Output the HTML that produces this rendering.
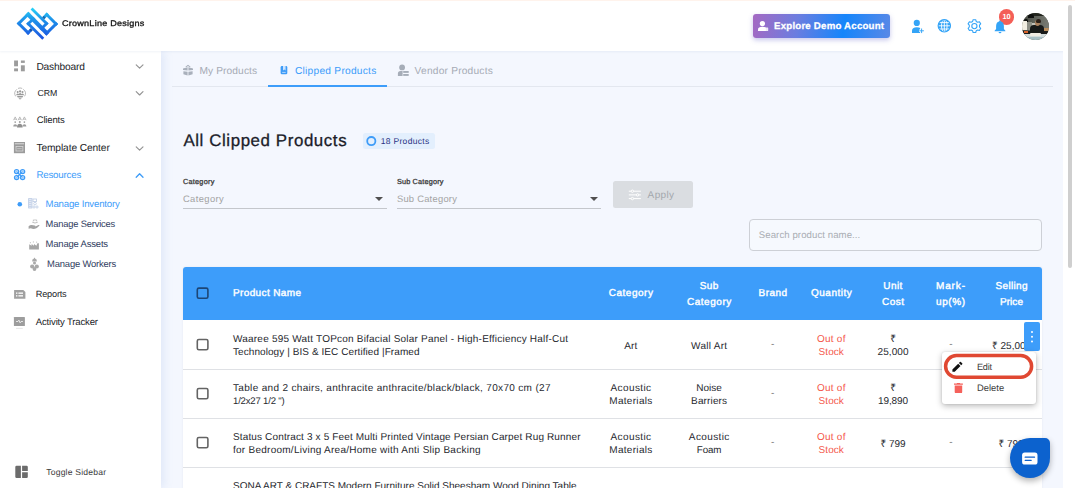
<!DOCTYPE html>
<html><head><meta charset="utf-8"><title>All Clipped Products</title>
<style>
*{box-sizing:border-box;margin:0;padding:0}
html,body{width:1075px;height:488px;overflow:hidden;background:#fff;font-family:"Liberation Sans",sans-serif;text-rendering:geometricPrecision;}
#root{position:relative;width:1075px;height:488px;overflow:hidden;background:#fff}
.a{position:absolute}
.t{position:absolute;white-space:nowrap}
svg{position:absolute;overflow:visible}
#main{left:161px;top:51px;width:902px;height:437px;background:#f4f7fe}
#topline{left:0;top:0;width:1075px;height:1px;background:#fff3ec}
#header{left:0;top:1px;width:1075px;height:50px;background:#fff;box-shadow:0 1px 2px rgba(70,100,150,.08)}
#sidebar{left:0;top:51px;width:161px;height:437px;background:#fff;box-shadow:3px 0 9px rgba(100,145,210,.14)}
#thumb{left:1068px;top:5px;width:4px;height:263px;border-radius:2px;background:#cfcfcf}
.cb{width:13px;height:13px;border:1.5px solid #3a3a3a;border-radius:2px}
.hr{height:1px;background:#dfe1e5}
</style></head><body><div id="root">
<div class="a" id="main"></div>
<div class="a" id="sidebar"></div>
<div class="a" id="header"></div>
<div class="a" id="topline"></div>
<div class="a" style="left:1063px;top:1px;width:12px;height:487px;background:#fff"></div>
<div class="a" id="thumb"></div>

<!-- tabs -->
<div class="a" style="left:172px;top:86px;width:881px;height:1px;background:#e3e7ef"></div>
<div class="a" style="left:268px;top:85px;width:119px;height:2px;background:#3d9dfa"></div>

<!-- badge -->
<div class="a" style="left:362.8px;top:133px;width:72.2px;height:15.8px;background:#e3effd;border-radius:2.5px"></div>
<svg style="left:364px;top:134px" width="14" height="14" viewBox="364 134 14 14"><circle cx="371.3" cy="141.1" r="4.1" fill="none" stroke="#3e9cf8" stroke-width="1.8"/></svg>

<!-- filters -->
<div class="a" style="left:183px;top:208px;width:204px;height:1px;background:#c4c7cc"></div>
<div class="a" style="left:397px;top:208px;width:204px;height:1px;background:#c4c7cc"></div>
<div class="a" style="left:374.7px;top:196.9px;width:0;height:0;border-left:4px solid transparent;border-right:4px solid transparent;border-top:4px solid #505050"></div>
<div class="a" style="left:589.9px;top:196.9px;width:0;height:0;border-left:4px solid transparent;border-right:4px solid transparent;border-top:4px solid #505050"></div>
<div class="a" style="left:613px;top:181.4px;width:80px;height:26.6px;background:#dadde1;border-radius:2.5px"></div>

<!-- search -->
<div class="a" style="left:749px;top:219px;width:293px;height:32px;border:1px solid #cdd0d6;border-radius:4px;background:#f6f9fe"></div>

<!-- table -->
<div class="a" style="left:183px;top:267px;width:859px;height:221px;background:#fff;border-radius:3px 3px 0 0;box-shadow:0 0 2px rgba(40,60,100,.10)"></div>
<div class="a" style="left:183px;top:267px;width:859px;height:53.4px;background:#3d9dfa;border-radius:3px 3px 0 0"></div>
<div class="a hr" style="left:183px;top:369px;width:859px"></div>
<div class="a hr" style="left:183px;top:418px;width:859px"></div>
<div class="a hr" style="left:183px;top:467px;width:859px"></div>
<svg style="left:190px;top:280px" width="24" height="180" viewBox="190 280 24 180" fill="none" stroke-width="1.6">
<rect x="197.3" y="288.1" width="10.6" height="10.2" rx="1.6" stroke="#1d4676"/>
<rect x="197.3" y="339.5" width="10.6" height="10.3" rx="1.6" stroke="#646464"/>
<rect x="197.3" y="388.5" width="10.6" height="10.3" rx="1.6" stroke="#646464"/>
<rect x="197.3" y="437.5" width="10.6" height="10.3" rx="1.6" stroke="#646464"/>
</svg>

<!-- kebab -->
<div class="a" style="z-index:5;left:1024px;top:322px;width:16px;height:29px;background:#3d9dfa;border-radius:2px"></div>
<div class="a" style="z-index:5;left:1031px;top:330.7px;width:2.2px;height:2.2px;background:#fff;border-radius:50%;box-shadow:0 4.7px 0 #fff,0 9.4px 0 #fff"></div>

<!-- popup -->
<div class="a" style="z-index:5;left:942px;top:351.5px;width:94px;height:52px;background:#fff;border-radius:3px;box-shadow:0 2px 6px rgba(0,0,0,.28),0 0 2px rgba(0,0,0,.12)"></div>
<svg style="z-index:5;left:940px;top:350px" width="100" height="32" viewBox="940 350 100 32"><rect x="945.6" y="355.5" width="86" height="21.700" rx="10.850" fill="none" stroke="#e04832" stroke-width="3.500"/></svg>

<!-- chat -->
<div class="a" style="z-index:5;left:1009.6px;top:437.8px;width:40.6px;height:40.6px;background:#0c62ce;border-radius:20px 5px 20px 20px;box-shadow:0 3px 6px rgba(0,0,0,.3)"></div>

<!-- demo button -->
<div class="a" style="left:753px;top:14px;width:137px;height:24px;border-radius:3px;background:linear-gradient(100deg,#a569c2 0%,#6a7de0 33%,#1585fb 66%,#5a88e6 100%);box-shadow:0 2px 5px rgba(90,90,200,.35)"></div>

<!-- avatar -->
<div class="a" style="left:1022px;top:12.8px;width:27px;height:27px;border-radius:50%;background:#55584f;overflow:hidden">
<div class="a" style="left:-2px;top:-2px;width:31px;height:31px;filter:blur(.7px)">
 <div class="a" style="left:0;top:0;width:31px;height:24px;background:linear-gradient(100deg,#3a3d36 0%,#5d6058 45%,#80837c 100%)"></div>
 <div class="a" style="left:4px;top:1px;width:24px;height:4px;background:#23261f;border-radius:0 0 6px 6px"></div>
 <div class="a" style="left:8px;top:3px;width:6px;height:4.5px;background:#0e100e;border-radius:3px 3px 0 0"></div>
 <div class="a" style="left:3.5px;top:8px;width:4px;height:3px;background:#0e100e;border-radius:2px 2px 0 0"></div>
 <div class="a" style="left:1.500px;top:10.500px;width:5.500px;height:9px;background:#f1eee2"></div>
 <div class="a" style="left:7px;top:11px;width:5px;height:8px;background:#8d8f86"></div>
 <div class="a" style="left:12px;top:12px;width:5px;height:5px;background:#d9d9d2;opacity:.8"></div>
 <div class="a" style="left:0;top:20.500px;width:31px;height:4.500px;background:#1a1b19"></div>
 <div class="a" style="left:3.500px;top:20.600px;width:4px;height:2px;background:#d8622a"></div>
 <div class="a" style="left:10px;top:14.500px;width:13.500px;height:8.500px;border-radius:4px 4px 1px 1px;background:#171919"></div>
 <div class="a" style="left:14.600px;top:9px;width:5.400px;height:6.400px;border-radius:50%;background:#a9805e"></div>
 <div class="a" style="left:16px;top:8.200px;width:5px;height:4.200px;border-radius:50% 50% 30% 30%;background:#2a1f18"></div>
 <div class="a" style="left:24px;top:17.500px;width:6px;height:2.500px;background:#b98d5c"></div>
 <div class="a" style="left:0;top:23.500px;width:31px;height:8px;background:#d3dcdc"></div>
 <div class="a" style="left:10px;top:22px;width:11px;height:3px;background:#f0ece4;border-radius:1px"></div>
 <div class="a" style="left:0;top:26.500px;width:31px;height:5px;background:#a9c0c6"></div>
</div></div>
<!-- bell badge -->
<div class="a" style="left:999px;top:9.2px;width:15.4px;height:15.4px;border-radius:50%;background:#f45f57"></div>


<!-- logo -->
<svg style="left:0;top:0" width="64" height="48" viewBox="0 0 64 48">
<defs><linearGradient id="lg" gradientUnits="userSpaceOnUse" x1="0" y1="8" x2="0" y2="40"><stop offset="0" stop-color="#27d3f7"/><stop offset=".35" stop-color="#1f95ea"/><stop offset="1" stop-color="#1a4fe0"/></linearGradient>
<mask id="lm"><g transform="matrix(.5 .5 -.5 .5 0 0)" fill="#fff"><rect x="40.15" y="-16.6" width="41.9" height="5.800000000000001"/><rect x="40.15" y="-16.6" width="4.200000000000003" height="23.42"/><rect x="40.15" y="2.62" width="22.79" height="4.2"/><rect x="58.74" y="-2.42" width="4.199999999999996" height="9.24"/><rect x="50.08" y="-6.43" width="32.019999999999996" height="4.01"/><rect x="50.08" y="-16.6" width="4.020000000000003" height="14.180000000000001"/><rect x="77.85" y="-34.22" width="4.200000000000003" height="23.419999999999998"/><rect x="59.26" y="-34.22" width="22.79" height="4.199999999999999"/><rect x="59.26" y="-34.22" width="4.200000000000003" height="9.239999999999998"/><rect x="40.15" y="-24.99" width="32.050000000000004" height="4.009999999999998"/><rect x="68.1" y="-24.99" width="4.02000000000001" height="14.189999999999998"/></g></mask></defs>
<rect x="14" y="4" width="48" height="40" fill="url(#lg)" mask="url(#lm)"/>
<g transform="matrix(.5 .5 -.5 .5 0 0)" fill="#083a7a" opacity=".5"><rect x="58.74" y="-2.42" width="4.2" height="3"/><rect x="59.26" y="-28" width="4.2" height="3"/></g>
</svg>

<!-- sidebar icons -->
<svg style="left:0;top:51px" width="161" height="437" viewBox="0 51 161 437">
<g fill="#9c9c9c">
 <rect x="14.1" y="60.5" width="3.9" height="5.8"/><rect x="14.1" y="68.4" width="3.9" height="2.9"/>
 <rect x="20.9" y="60.5" width="3.9" height="2.4"/><rect x="20.9" y="65.3" width="3.9" height="6"/>
</g>
<!-- chevrons -->
<g fill="none" stroke="#939393" stroke-width="1.15" stroke-linecap="round" stroke-linejoin="round">
 <path d="M136.2 64.8 l3.4 3.4 l3.4 -3.4"/><path d="M136.2 91.6 l3.4 3.4 l3.4 -3.4"/><path d="M136.2 146.8 l3.4 3.4 l3.4 -3.4"/>
</g>
<path d="M136.2 177.2 l3.4 -3.4 l3.4 3.4" fill="none" stroke="#3e9cf8" stroke-width="1.3" stroke-linecap="round" stroke-linejoin="round"/>
<!-- CRM -->
<g fill="none" stroke="#a8a8a8" stroke-width=".8">
 <path d="M15.6 96.3a5.4 5.4 0 0 1 1.3-7"/><path d="M24.600 96.300a5.400 5.400 0 0 0-1.300-7"/><path d="M18 88.400a5.400 5.400 0 0 1 4.200 0"/>
</g>
<g fill="#9a9a9a">
 <circle cx="17.700" cy="92" r="1"/><circle cx="20.100" cy="91.400" r="1.100"/><circle cx="22.500" cy="92" r="1"/>
 <path d="M16.200 95.200q0-1.800 1.500-1.800q.8 0 1.200.6q.5-.9 1.200-.9t1.200.9q.4-.6 1.200-.6q1.500 0 1.500 1.800z"/>
 <path d="M17 96h6.200l-.8 1.600h-4.600zM18.600 98.200h3l-.6 1.100h-1.800z"/>
</g>
<!-- Clients -->
<g fill="none" stroke="#a6a6a6" stroke-width=".7" stroke-linejoin="round">
 <path d="M13.500 120.200l1.700-3.300l1.700 3.300M14.100 119.200h2.200M18.100 120.200l1.700-3.300l1.700 3.300M18.700 119.200h2.200M22.700 120.200l1.700-3.300l1.700 3.300M23.300 119.200h2.200"/>
</g>
<g fill="#9c9c9c">
  <circle cx="15.200" cy="122.100" r=".85"/><circle cx="19.800" cy="122" r="1"/><circle cx="24.400" cy="122.100" r=".85"/>
 <path d="M13.200 126.600a2 2.400 0 0 1 4 0zM22.400 126.600a2 2.400 0 0 1 4 0z"/>
 <path d="M17 127.400a2.800 3.600 0 0 1 5.600 0z" fill="#909090"/>
</g>
<!-- Template -->
<rect x="13.9" y="142" width="11.1" height="11.2" fill="#9b9b9b"/>
<rect x="14.8" y="143" width="9.3" height="1.4" fill="#c9c9c9"/>
<rect x="16" y="146.4" width="6.9" height="4.6" fill="none" stroke="#d6d6d6" stroke-width=".8"/>
<path d="M17.2 148.7h4.5" stroke="#d6d6d6" stroke-width=".7"/>
<!-- Resources -->
<g fill="none" stroke="#3e9cf8" stroke-width="1.25">
 <circle cx="16.6" cy="171.6" r="2.1"/><circle cx="22.6" cy="171.6" r="2.1"/><circle cx="16.6" cy="177.6" r="2.1"/><circle cx="22.6" cy="177.6" r="2.1"/>
 <path d="M17.4 172.4l4.4 4.4M21.8 172.4l-4.4 4.4" stroke-width="1.3"/>
</g>
<g fill="#3e9cf8" opacity=".55"><circle cx="16.6" cy="171.6" r="1.2"/><circle cx="22.6" cy="171.6" r="1.2"/><circle cx="16.6" cy="177.6" r="1.2"/><circle cx="22.6" cy="177.6" r="1.2"/></g>
<!-- active dot -->
<circle cx="19.8" cy="204.2" r="2.3" fill="#3e9cf8"/>
<!-- inventory icon -->
<g fill="none" stroke="#bccbe4" stroke-width=".8">
 <rect x="28.6" y="198.6" width="3.4" height="9.4" fill="#e6ecf7"/>
 <path d="M29 200.4h2.6M29 202.4h2.6M29 204.4h2.6M29 206.4h2.6"/>
 <rect x="33" y="199" width="3.4" height="2.6"/><circle cx="35" cy="203.6" r="1.3"/><circle cx="34" cy="207" r="1.1"/><circle cx="37" cy="207" r="1.1"/>
</g>
<!-- services icon -->
<path d="M28.600 226.200q1.600-1.300 3.200-1.100l2.800.5q1 .2.900 1l2.900-1.500q1-.3 1.200.5q-2.200 2.600-4.600 3.200q-2.200.4-4.200-.5l-2.200.4z" fill="#a3a3a3"/>
<g stroke="#b3b3b3" stroke-width=".8" stroke-linecap="round" fill="none"><path d="M32.600 222.400q2.400 1.400 4.800 0"/><path d="M33.400 220v.9M35 219.500v.9M36.600 220v.9"/></g>
<!-- assets icon -->
<path d="M29.200 249.600v-5.300l2.400 1.500v-1.800l2.400 1.800v-1.800l2.400 1.800l1-2.600h1.500v6.400z" fill="#a6a6a6"/>
<path d="M30.400 242v1.300M33.400 241.300v1.300M36.600 241.600v1.200" stroke="#bcbcbc" stroke-width=".8"/>
<!-- workers icon -->
<g fill="#a9a9a9">
 <path d="M32.200 260.800a2.300 2.300 0 0 1 4.600 0v.6h-4.600z"/><rect x="34" y="257.800" width="1" height="1.400"/>
 <circle cx="34.500" cy="263" r="1.500"/>
 <circle cx="32.200" cy="266.500" r="2.100"/><circle cx="36.800" cy="266.500" r="2.100"/><circle cx="34.500" cy="269" r="1.900"/>
</g>
<!-- reports -->
<path d="M14.100 290h9.200l2.100 2v6.700h-11.300z" fill="#a0a0a0"/>
<g fill="#fff"><rect x="16" y="292.500" width="1.400" height="1.300"/><rect x="18.400" y="292.500" width="4.600" height="1.300"/><rect x="16" y="295.200" width="1.400" height="1.300"/><rect x="18.400" y="295.200" width="4.600" height="1.300"/></g>
<!-- activity -->
<rect x="13.900" y="317" width="11" height="9" rx=".6" fill="#9d9d9d"/>
<path d="M16 321.500h2l.9-1.400l1.200 2.800l.9-1.400h2" fill="none" stroke="#fff" stroke-width=".7" stroke-linejoin="round"/>
<path d="M16 328.400h6.800" stroke="#dcdcdc" stroke-width=".7"/>
<!-- toggle -->
<g fill="#6c6c6c"><path d="M16.500 465.800h4.400v12.200h-4.400a1.200 1.200 0 0 1-1.200-1.200v-9.800a1.200 1.200 0 0 1 1.200-1.200z"/><path d="M22.100 465.800h4.500a1.200 1.200 0 0 1 1.200 1.200v3.900h-5.700z"/><path d="M22.100 472.300h5.700v4.500a1.200 1.200 0 0 1-1.200 1.200h-4.500z"/></g>
</svg>

<!-- header icons -->
<svg style="left:745px;top:0" width="320" height="51" viewBox="745 0 320 51">
<!-- demo user -->
<g fill="#fff"><circle cx="762.400" cy="23.600" r="2.600"/><path d="M758 31v-1.600q0-2.600 4.400-2.600q2.400 0 3.400.8v3.400z"/><rect x="764.800" y="27.600" width="3.400" height="3.400" rx=".5" opacity=".85"/></g>
<!-- user plus -->
<g fill="#34a4f7"><circle cx="916.800" cy="22.900" r="3.100"/><path d="M912 33v-2.200q0-3.600 4.800-3.600q2.200 0 3.400 .9v4.900z"/></g>
<path d="M921.600 28.300v5M919.100 30.800h5" stroke="#fff" stroke-width="2.400"/><path d="M921.600 28.500v4.600M919.300 30.800h4.600" stroke="#34a4f7" stroke-width=".95"/>

<!-- globe -->
<circle cx="944.300" cy="25.800" r="6.200" fill="#34a4f7"/>
<g fill="none" stroke="#fff" stroke-width=".9"><ellipse cx="944.300" cy="25.800" rx="2.800" ry="6.200"/><path d="M938.100 25.800h12.400M939 22.600h10.600M939 29h10.600M944.300 19.600v12.400"/></g>
<circle cx="944.300" cy="25.800" r="6.200" fill="none" stroke="#34a4f7" stroke-width="1.100"/>
<!-- gear -->
<g transform="translate(974.400 26.100)" fill="none" stroke="#34a4f7" stroke-width="1.100" stroke-linejoin="round">
<path d="M-1.300 -6.400h2.600l.5 1.700l1.500 .8l1.700 -.5l1.300 2.200l-1.200 1.300v1.800l1.200 1.300l-1.300 2.200l-1.700 -.5l-1.500 .8l-.5 1.700h-2.600l-.5 -1.700l-1.500 -.8l-1.700 .5l-1.300 -2.200l1.200 -1.300v-1.800l-1.200 -1.300l1.300 -2.200l1.700 .5l1.500 -.8z"/>
<circle r="2.600"/></g>
<!-- bell -->
<path d="M1000 20.600q.9 0 .9.900q3 .9 3 4.600v3l1.500 1.600v.6h-10.800v-.6l1.500-1.600v-3q0-3.700 3-4.600q0-.9.900-.9zM998.600 32h2.800q0 1.300-1.400 1.300t-1.400-1.300z" fill="#34a4f7"/>
</svg>

<!-- tab icons -->
<svg style="left:176px;top:58px" width="240" height="24" viewBox="176 58 240 24">
<g fill="#a9b0bb">
 <path d="M183 68.400l4.600-1.200v3.400l-4.600-.6zM188.400 67.200l4.600 1.200v1.600l-4.600.6zM183.400 71.200l4.200.6v3.800l-4.200-1.400zM188.400 71.800l4.200-.6v3l-4.200 1.400z"/>
 <path d="M185.400 66.800l2.600-2l2.600 2l-1 .4l-1.600-1.200l-1.600 1.200z"/>
</g>
<rect x="280.600" y="66.100" width="6.700" height="8.200" rx="1.300" fill="#3e9cf8"/>
<path d="M283 66.100h2.600v4.300l-1.300-1l-1.300 1z" fill="#cfe4fd"/>
<path d="M282.200 72.400h3.500" stroke="#cfe4fd" stroke-width=".8"/>
<g fill="#a6adb8"><circle cx="402.100" cy="67.400" r="2.900"/><path d="M397.900 76v-2.400q0-2.600 2.600-2.600h2.100v5z"/><rect x="403.200" y="71" width="5.500" height="1.900"/><rect x="403.200" y="74" width="5.500" height="1.900"/></g>
</svg>

<!-- apply sliders -->
<svg style="left:626px;top:186px" width="18" height="18" viewBox="626 186 18 18">
<g stroke="#fff" stroke-width="1" fill="#dcdfe2"><path d="M628.800 191.200h12.100M628.800 194.900h12.100M628.800 198.600h12.100"/><circle cx="632.400" cy="191.200" r="1.200"/><circle cx="637.600" cy="194.900" r="1.200"/><circle cx="632.400" cy="198.600" r="1.200"/></g>
</svg>

<!-- popup icons -->
<svg style="z-index:6;left:948px;top:358px" width="20" height="40" viewBox="948 358 20 40">
<path d="M952.400 371.800v-2.300l5.800-5.800l2.300 2.300l-5.800 5.800zM958.900 363l1-1q.5-.5 1 0l1.300 1.300q.5.500 0 1l-1 1z" fill="#111"/>
<path d="M954 383.400h2.600l.5-.5h2.700l.5.500h2.600v1.300h-8.900zM954.700 385.500h7.500v6.400a1.200 1.200 0 0 1-1.200 1.200h-5.100a1.200 1.200 0 0 1-1.200-1.200z" fill="#f5615b"/>
</svg>

<!-- chat icon -->
<svg style="z-index:6;left:1018px;top:448px" width="24" height="22" viewBox="1018 448 24 22">
<rect x="1022.100" y="452.600" width="15.400" height="11.900" rx="2.600" fill="#fff"/>
<path d="M1025.200 457.200h9.300M1025.200 460.300h6" stroke="#0c60cc" stroke-width="1.300" stroke-linecap="round"/>
</svg>

<span class="t" style="top:19.00px;font-size:8.2px;line-height:10.66px;color:#161616;letter-spacing:0.199px;left:61.80px;-webkit-text-stroke:.3px #161616;transform:scaleX(1.11);transform-origin:0 50%;">CrownLine Designs</span>
<span class="t" style="top:20.80px;font-size:9.7px;line-height:12.61px;color:#fff;font-weight:700;letter-spacing:0.203px;left:774.00px;-webkit-text-stroke:.25px #fff;">Explore Demo Account</span>
<span class="t" style="top:12.20px;font-size:7.4px;line-height:9.62px;color:#fff;font-weight:700;left:1006.60px;transform:translateX(-50%);">10</span>
<span class="t" style="top:61.00px;font-size:10.2px;line-height:13.26px;color:#222428;letter-spacing:-0.155px;left:36.40px;">Dashboard</span>
<span class="t" style="top:88.40px;font-size:8.78px;line-height:11.41px;color:#222428;letter-spacing:-0.184px;left:37.60px;">CRM</span>
<span class="t" style="top:115.20px;font-size:9.56px;line-height:12.43px;color:#222428;letter-spacing:-0.181px;left:36.70px;">Clients</span>
<span class="t" style="top:142.15px;font-size:10.2px;line-height:13.26px;color:#222428;letter-spacing:-0.096px;left:36.40px;">Template Center</span>
<span class="t" style="top:170.00px;font-size:9.71px;line-height:12.62px;color:#3d9dfa;letter-spacing:-0.186px;left:36.40px;">Resources</span>
<span class="t" style="top:198.90px;font-size:9.62px;line-height:12.51px;color:#3d9dfa;letter-spacing:-0.182px;left:45.60px;">Manage Inventory</span>
<span class="t" style="top:218.10px;font-size:9.36px;line-height:12.17px;color:#2e3b5e;letter-spacing:-0.179px;left:45.60px;">Manage Services</span>
<span class="t" style="top:239.30px;font-size:9.47px;line-height:12.31px;color:#2e3b5e;letter-spacing:-0.188px;left:45.60px;">Manage Assets</span>
<span class="t" style="top:258.30px;font-size:9.42px;line-height:12.25px;color:#2e3b5e;letter-spacing:-0.181px;left:47.10px;">Manage Workers</span>
<span class="t" style="top:288.70px;font-size:9.18px;line-height:11.93px;color:#222428;letter-spacing:-0.204px;left:35.80px;">Reports</span>
<span class="t" style="top:316.90px;font-size:9.59px;line-height:12.47px;color:#222428;letter-spacing:-0.182px;left:35.80px;">Activity Tracker</span>
<span class="t" style="top:466.80px;font-size:8.6px;line-height:11.18px;color:#3c3c3c;letter-spacing:0.197px;left:46.20px;">Toggle Sidebar</span>
<span class="t" style="top:65.00px;font-size:10.2px;line-height:13.26px;color:#a6abb5;letter-spacing:0.098px;left:199.50px;">My Products</span>
<span class="t" style="top:65.00px;font-size:10.2px;line-height:13.26px;color:#3d9dfa;letter-spacing:0.247px;left:295.00px;">Clipped Products</span>
<span class="t" style="top:65.00px;font-size:10.2px;line-height:13.26px;color:#a6abb5;letter-spacing:0.205px;left:414.60px;">Vendor Products</span>
<span class="t" style="top:130.00px;font-size:16.9px;line-height:21.97px;color:#1b1d2a;letter-spacing:0.585px;left:183.40px;-webkit-text-stroke:.3px #1b1d2a;">All Clipped Products</span>
<span class="t" style="top:136.00px;font-size:8.5px;line-height:11.05px;color:#2a3384;letter-spacing:0.323px;left:380.70px;">18 Products</span>
<span class="t" style="top:177.00px;font-size:7.3px;line-height:9.49px;color:#3a3a3a;letter-spacing:0.256px;left:182.90px;-webkit-text-stroke:.3px #3a3a3a;">Category</span>
<span class="t" style="top:192.50px;font-size:9.4px;line-height:12.22px;color:#a3a3a3;letter-spacing:0.408px;left:182.90px;">Category</span>
<span class="t" style="top:177.00px;font-size:7.3px;line-height:9.49px;color:#3a3a3a;letter-spacing:0.180px;left:396.90px;-webkit-text-stroke:.3px #3a3a3a;">Sub Category</span>
<span class="t" style="top:192.50px;font-size:9.4px;line-height:12.22px;color:#a3a3a3;letter-spacing:0.243px;left:396.90px;">Sub Category</span>
<span class="t" style="top:188.90px;font-size:10.0px;line-height:13.0px;color:#a4a8ad;letter-spacing:0.371px;left:647.60px;">Apply</span>
<span class="t" style="top:230.00px;font-size:9.6px;line-height:12.48px;color:#a9adb3;letter-spacing:0.084px;left:758.80px;">Search product name...</span>
<span class="t" style="top:287.40px;font-size:10.0px;line-height:13.0px;color:#fff;letter-spacing:0.371px;left:233.00px;-webkit-text-stroke:.4px #fff;">Product Name</span>
<span class="t" style="top:287.40px;font-size:10.0px;line-height:13.0px;color:#fff;letter-spacing:0.532px;left:631.07px;transform:translateX(-50%);-webkit-text-stroke:.4px #fff;">Category</span>
<span class="t" style="top:279.60px;font-size:10.0px;line-height:13.0px;color:#fff;letter-spacing:0.402px;left:709.30px;transform:translateX(-50%);-webkit-text-stroke:.4px #fff;">Sub</span>
<span class="t" style="top:295.70px;font-size:10.0px;line-height:13.0px;color:#fff;letter-spacing:0.532px;left:709.37px;transform:translateX(-50%);-webkit-text-stroke:.4px #fff;">Category</span>
<span class="t" style="top:287.40px;font-size:10.0px;line-height:13.0px;color:#fff;letter-spacing:0.428px;left:773.01px;transform:translateX(-50%);-webkit-text-stroke:.4px #fff;">Brand</span>
<span class="t" style="top:287.40px;font-size:10.0px;line-height:13.0px;color:#fff;letter-spacing:0.507px;left:831.65px;transform:translateX(-50%);-webkit-text-stroke:.4px #fff;">Quantity</span>
<span class="t" style="top:279.60px;font-size:10.0px;line-height:13.0px;color:#fff;letter-spacing:0.468px;left:893.03px;transform:translateX(-50%);-webkit-text-stroke:.4px #fff;">Unit</span>
<span class="t" style="top:295.70px;font-size:10.0px;line-height:13.0px;color:#fff;letter-spacing:0.479px;left:893.24px;transform:translateX(-50%);-webkit-text-stroke:.4px #fff;">Cost</span>
<span class="t" style="top:279.60px;font-size:10.0px;line-height:13.0px;color:#fff;letter-spacing:0.859px;left:950.93px;transform:translateX(-50%);-webkit-text-stroke:.4px #fff;">Mark-</span>
<span class="t" style="top:295.70px;font-size:10.0px;line-height:13.0px;color:#fff;letter-spacing:0.578px;left:950.79px;transform:translateX(-50%);-webkit-text-stroke:.4px #fff;">up(%)</span>
<span class="t" style="top:279.60px;font-size:10.0px;line-height:13.0px;color:#fff;letter-spacing:0.328px;left:1011.66px;transform:translateX(-50%);-webkit-text-stroke:.4px #fff;">Selling</span>
<span class="t" style="top:295.70px;font-size:10.0px;line-height:13.0px;color:#fff;letter-spacing:0.051px;left:1011.53px;transform:translateX(-50%);-webkit-text-stroke:.4px #fff;">Price</span>
<span class="t" style="top:333.00px;font-size:10.0px;line-height:13.0px;color:#26282e;letter-spacing:0.210px;left:233.00px;">Waaree 595 Watt TOPcon Bifacial Solar Panel - High-Efficiency Half-Cut</span>
<span class="t" style="top:346.10px;font-size:10.0px;line-height:13.0px;color:#26282e;letter-spacing:0.074px;left:233.00px;">Technology | BIS &amp; IEC Certified |Framed</span>
<span class="t" style="top:339.70px;font-size:10.0px;line-height:13.0px;color:#26282e;letter-spacing:0.109px;left:630.85px;transform:translateX(-50%);">Art</span>
<span class="t" style="top:339.70px;font-size:10.0px;line-height:13.0px;color:#26282e;letter-spacing:0.275px;left:709.24px;transform:translateX(-50%);">Wall Art</span>
<span class="t" style="top:338.10px;font-size:10.0px;line-height:13.0px;color:#777;left:772.70px;transform:translateX(-50%);">-</span>
<span class="t" style="top:333.00px;font-size:10.0px;line-height:13.0px;color:#f4574a;letter-spacing:0.270px;left:831.34px;transform:translateX(-50%);">Out of</span>
<span class="t" style="top:346.10px;font-size:10.0px;line-height:13.0px;color:#f4574a;letter-spacing:0.046px;left:831.22px;transform:translateX(-50%);">Stock</span>
<span class="t" style="top:333.00px;font-size:10.0px;line-height:13.0px;color:#26282e;left:893.10px;transform:translateX(-50%);">₹</span>
<span class="t" style="top:346.10px;font-size:10.0px;line-height:13.0px;color:#26282e;letter-spacing:0.081px;left:893.04px;transform:translateX(-50%);">25,000</span>
<span class="t" style="top:338.10px;font-size:10.0px;line-height:13.0px;color:#777;left:950.80px;transform:translateX(-50%);">-</span>
<span class="t" style="top:339.70px;font-size:10.0px;line-height:13.0px;color:#26282e;letter-spacing:-0.013px;left:992.10px;">₹ 25,000</span>
<span class="t" style="top:381.90px;font-size:10.0px;line-height:13.0px;color:#26282e;letter-spacing:0.330px;left:233.00px;">Table and 2 chairs, anthracite anthracite/black/black, 70x70 cm (27</span>
<span class="t" style="top:396.00px;font-size:9.55px;line-height:12.42px;color:#26282e;letter-spacing:-0.176px;left:233.00px;">1/2x27 1/2 &quot;)</span>
<span class="t" style="top:381.90px;font-size:10.0px;line-height:13.0px;color:#26282e;letter-spacing:0.386px;left:630.99px;transform:translateX(-50%);">Acoustic</span>
<span class="t" style="top:395.00px;font-size:10.0px;line-height:13.0px;color:#26282e;letter-spacing:0.303px;left:630.95px;transform:translateX(-50%);">Materials</span>
<span class="t" style="top:381.90px;font-size:10.0px;line-height:13.0px;color:#26282e;letter-spacing:-0.020px;left:709.09px;transform:translateX(-50%);">Noise</span>
<span class="t" style="top:395.00px;font-size:10.0px;line-height:13.0px;color:#26282e;letter-spacing:0.141px;left:709.17px;transform:translateX(-50%);">Barriers</span>
<span class="t" style="top:387.00px;font-size:10.0px;line-height:13.0px;color:#777;left:772.70px;transform:translateX(-50%);">-</span>
<span class="t" style="top:381.90px;font-size:10.0px;line-height:13.0px;color:#f4574a;letter-spacing:0.270px;left:831.34px;transform:translateX(-50%);">Out of</span>
<span class="t" style="top:395.00px;font-size:10.0px;line-height:13.0px;color:#f4574a;letter-spacing:0.046px;left:831.22px;transform:translateX(-50%);">Stock</span>
<span class="t" style="top:381.90px;font-size:10.0px;line-height:13.0px;color:#26282e;left:893.10px;transform:translateX(-50%);">₹</span>
<span class="t" style="top:395.00px;font-size:10.0px;line-height:13.0px;color:#26282e;letter-spacing:-0.119px;left:892.94px;transform:translateX(-50%);">19,890</span>
<span class="t" style="top:430.90px;font-size:10.0px;line-height:13.0px;color:#26282e;letter-spacing:0.141px;left:233.00px;">Status Contract 3 x 5 Feet Multi Printed Vintage Persian Carpet Rug Runner</span>
<span class="t" style="top:444.00px;font-size:10.0px;line-height:13.0px;color:#26282e;letter-spacing:0.259px;left:233.00px;">for Bedroom/Living Area/Home with Anti Slip Backing</span>
<span class="t" style="top:430.90px;font-size:10.0px;line-height:13.0px;color:#26282e;letter-spacing:0.386px;left:630.99px;transform:translateX(-50%);">Acoustic</span>
<span class="t" style="top:444.00px;font-size:10.0px;line-height:13.0px;color:#26282e;letter-spacing:0.303px;left:630.95px;transform:translateX(-50%);">Materials</span>
<span class="t" style="top:430.90px;font-size:10.0px;line-height:13.0px;color:#26282e;letter-spacing:0.386px;left:709.29px;transform:translateX(-50%);">Acoustic</span>
<span class="t" style="top:445.00px;font-size:9.8px;line-height:12.74px;color:#26282e;letter-spacing:-0.182px;left:709.01px;transform:translateX(-50%);">Foam</span>
<span class="t" style="top:436.00px;font-size:10.0px;line-height:13.0px;color:#777;left:772.70px;transform:translateX(-50%);">-</span>
<span class="t" style="top:430.90px;font-size:10.0px;line-height:13.0px;color:#f4574a;letter-spacing:0.270px;left:831.34px;transform:translateX(-50%);">Out of</span>
<span class="t" style="top:444.00px;font-size:10.0px;line-height:13.0px;color:#f4574a;letter-spacing:0.046px;left:831.22px;transform:translateX(-50%);">Stock</span>
<span class="t" style="top:437.60px;font-size:10.0px;line-height:13.0px;color:#26282e;letter-spacing:-0.047px;left:892.98px;transform:translateX(-50%);">₹ 799</span>
<span class="t" style="top:436.00px;font-size:10.0px;line-height:13.0px;color:#777;left:950.80px;transform:translateX(-50%);">-</span>
<span class="t" style="top:437.60px;font-size:10.0px;line-height:13.0px;color:#26282e;letter-spacing:-0.047px;left:998.50px;">₹ 799</span>
<span class="t" style="top:479.90px;font-size:10.0px;line-height:13.0px;color:#26282e;letter-spacing:0.003px;left:233.00px;">SONA ART &amp; CRAFTS Modern Furniture Solid Sheesham Wood Dining Table</span>
<span class="t" style="top:361.85px;font-size:9.16px;line-height:11.91px;color:#3c3c3c;letter-spacing:-0.194px;left:976.90px;z-index:6;">Edit</span>
<span class="t" style="top:381.95px;font-size:9.4px;line-height:12.22px;color:#3c3c3c;letter-spacing:0.038px;left:976.90px;z-index:6;">Delete</span>
</div></body></html>
